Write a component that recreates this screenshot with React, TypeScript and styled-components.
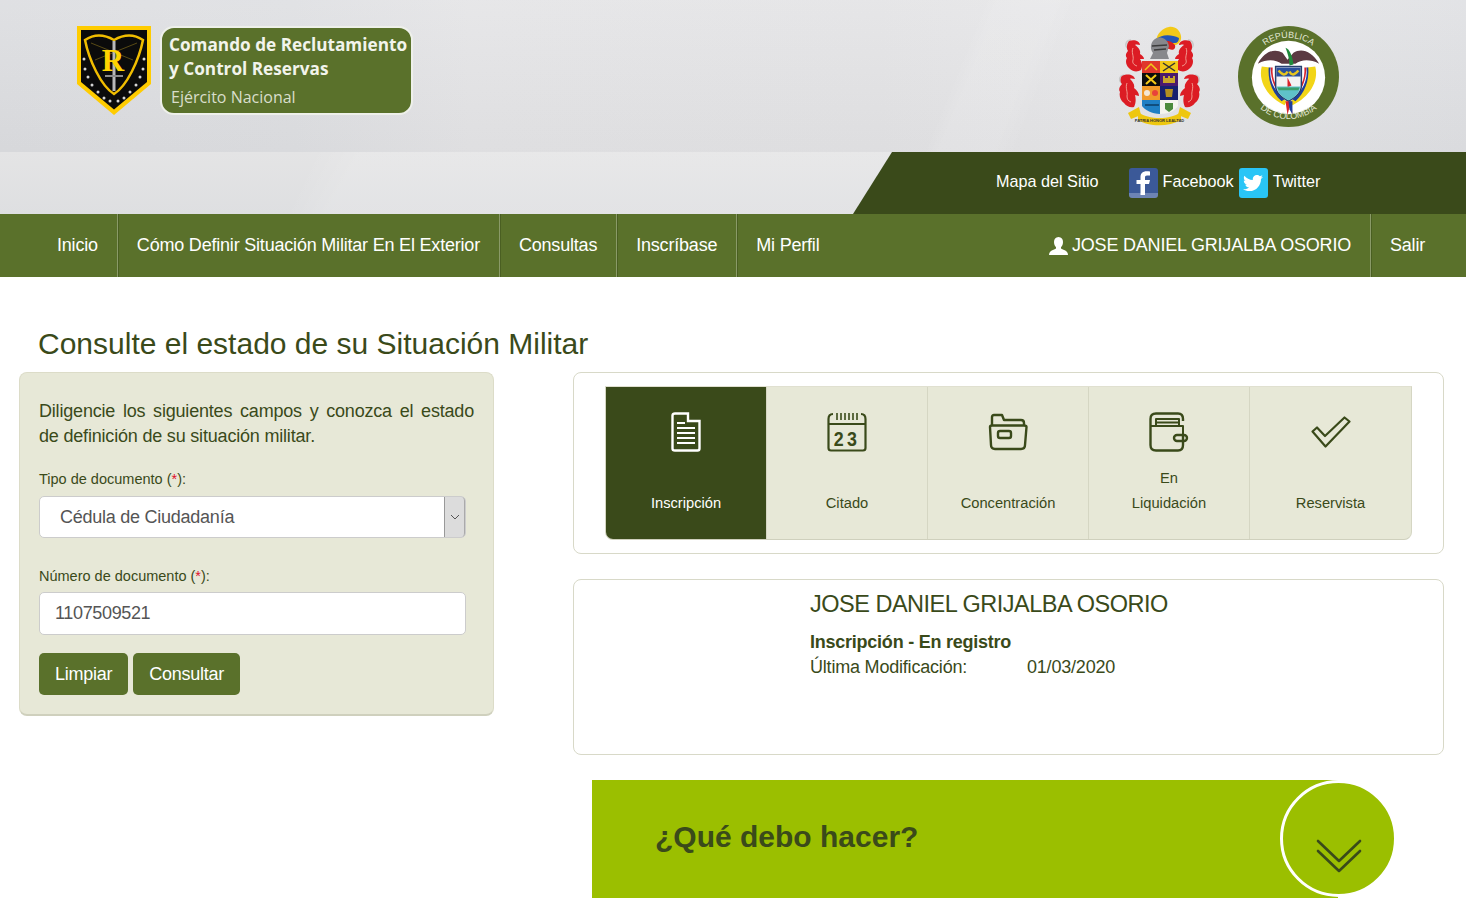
import styled, { createGlobalStyle } from "styled-components";
import { FaTwitter } from "react-icons/fa";

const dark = "#3a4a1a";
const olive = "#5a712b";
const sand = "#e7e8d7";
const lime = "#9bbf00";

const navLeft = ["Inicio", "Cómo Definir Situación Militar En El Exterior", "Consultas", "Inscríbase"];

const GlobalStyle = createGlobalStyle`
  html, body {
    margin: 0;
    padding: 0;
    background: #fff;
  }
  body {
    font-family: "Liberation Sans", Arial, sans-serif;
    color: ${dark};
  }
  * {
    box-sizing: border-box;
  }
`;

const Page = styled.div`
  width: 100%;
  min-height: 916px;
  overflow: hidden;
`;

const Header = styled.header`
  height: 214px;
  display: flex;
  flex-direction: column;
`;

const Brand = styled.div`
  height: 152px;
  flex: none;
  display: flex;
  align-items: flex-start;
  padding: 26px 0 0 77px;
  background:
    linear-gradient(112deg, transparent 0 64.500%, rgba(255, 255, 255, 0.1) 65.500% 69%, transparent 70.500%),
    linear-gradient(180deg, rgba(255, 255, 255, 0.1), rgba(0, 0, 0, 0.025)),
    linear-gradient(90deg, #dcdde0 0%, #dedfe2 20%, #e4e4e6 32%, #e3e3e5 60%, #e6e6e8 75%, #dfe0e3 100%);
`;

const BrandBadge = styled.div`
  width: 253px;
  height: 89px;
  margin: 0 0 0 9px;
  padding: 5px 0 0 7px;
  background: ${olive};
  border: 2px solid #eef0ea;
  border-radius: 14px;
  color: #f2f4ec;
  font-family: "Open Sans", sans-serif;
`;

const BrandTitle = styled.div`
  font-size: 17.2px;
  font-weight: 700;
  line-height: 24px;
  white-space: nowrap;
`;

const BrandSub = styled.div`
  margin: 4px 0 0 2px;
  font-size: 16px;
  line-height: 24px;
  color: #d9decb;
`;

const Crests = styled.div`
  margin-left: auto;
  display: flex;
  align-items: flex-start;
  gap: 38px;
  padding-right: 127px;
`;

const SocialRow = styled.div`
  height: 62px;
  flex: none;
  display: flex;
  justify-content: flex-end;
  background:
    linear-gradient(115deg, transparent 0 21%, rgba(255, 255, 255, 0.14) 24% 100%),
    linear-gradient(180deg, #e4e4e5, #dedfe1);
`;

const SocialBar = styled.div`
  width: 613px;
  display: flex;
  align-items: center;
  padding: 0 0 4px 143px;
  background: ${dark};
  clip-path: polygon(39px 0, 100% 0, 100% 100%, 0 100%);
  font-size: 16.2px;
  color: #fff;
`;

const SocialLink = styled.a`
  display: flex;
  align-items: center;
  gap: 5px;
  margin-right: 5px;
`;

const SiteMap = styled.a`
  margin-right: 30px;
`;

const SocialIcon = styled.span<{ $bg: string }>`
  width: 29px;
  height: 30px;
  margin-top: 4px;
  display: flex;
  align-items: center;
  justify-content: center;
  overflow: hidden;
  border-radius: 3px;
  background: ${(p) => p.$bg};
`;

const Nav = styled.nav`
  height: 63px;
  display: flex;
  padding-left: 38px;
  background: ${olive};
  color: #fff;
  font-size: 18px;
  letter-spacing: -0.2px;
`;

const NavItem = styled.a<{ $plain?: boolean }>`
  display: flex;
  align-items: center;
  gap: 4px;
  padding: 0 19px;
  white-space: nowrap;
  ${(p) => !p.$plain && "border-right: 1px solid #8a9a68; box-shadow: 1px 0 0 #4a5f22;"}
`;

const NavSpacer = styled.div`
  flex: 1;
`;

const SalirItem = styled(NavItem)`
  padding-right: 41px;
`;

const Title = styled.h1`
  margin: 0;
  padding: 49px 0 0 38px;
  height: 95px;
  font-size: 30px;
  font-weight: 400;
  line-height: 36px;
  color: ${dark};
`;

const Columns = styled.main`
  display: grid;
  grid-template-columns: 475px 871px;
  column-gap: 79px;
  padding-left: 19px;
  align-items: start;
`;

const FormPanel = styled.section`
  height: 344px;
  padding: 26px 19px 0 19px;
  background: ${sand};
  border: 1px solid #dcdcc8;
  border-bottom: 2px solid #cfd0bd;
  border-radius: 8px;
`;

const Intro = styled.p`
  margin: 0;
  font-size: 18px;
  line-height: 25px;
  letter-spacing: -0.19px;
  text-align: justify;
`;

const FieldLabel = styled.label<{ $top: number }>`
  display: block;
  margin-top: ${(p) => p.$top}px;
  font-size: 14.5px;
  line-height: 20px;
`;

const Req = styled.span`
  color: #e0112b;
`;

const SelectBox = styled.div`
  width: 427px;
  height: 42px;
  margin: 7px 0 28px;
  display: flex;
  align-items: center;
  padding-left: 20px;
  position: relative;
  background: #fff;
  border: 1px solid #ccc;
  border-radius: 5px;
  font-size: 18px;
  letter-spacing: -0.25px;
  color: #555;
`;

const SelectArrow = styled.span`
  position: absolute;
  top: 0;
  right: 0;
  width: 21px;
  height: 40px;
  display: flex;
  align-items: center;
  justify-content: center;
  background: #dcdcdc;
  border-left: 1px solid #999;
  border-right: 1px solid #aaa;
  border-radius: 0 4px 4px 0;
`;

const TextBox = styled.div`
  width: 427px;
  height: 43px;
  margin-top: 6px;
  display: flex;
  align-items: center;
  padding-left: 15px;
  background: #fff;
  border: 1px solid #ccc;
  border-radius: 5px;
  font-size: 18px;
  letter-spacing: -0.35px;
  color: #555;
`;

const Buttons = styled.div`
  display: flex;
  gap: 5px;
  margin-top: 18px;
`;

const Button = styled.button`
  height: 42px;
  padding: 0 16px;
  border: none;
  border-radius: 5px;
  background: ${olive};
  color: #fff;
  font-family: inherit;
  font-size: 18px;
  letter-spacing: -0.25px;
`;

const RightColumn = styled.div`
  display: flex;
  flex-direction: column;
`;

const Card = styled.section`
  background: #fff;
  border: 1px solid #d8d9c8;
  border-radius: 8px;
`;

const StepsCard = styled(Card)`
  height: 182px;
  padding: 13px 31px;
`;

const Steps = styled.div`
  width: 807px;
  height: 154px;
  display: grid;
  grid-template-columns: repeat(5, 1fr);
  overflow: hidden;
  border: 1px solid #d5d6c3;
  border-top-color: #e0e0d0;
  border-bottom: 1px solid #cfd0bd;
  border-radius: 0 0 8px 8px;
  background: ${sand};
`;

const Step = styled.div<{ $active?: boolean }>`
  display: flex;
  flex-direction: column;
  align-items: center;
  justify-content: space-between;
  padding: 25px 0 23px;
  background: ${(p) => (p.$active ? dark : "transparent")};
  color: ${(p) => (p.$active ? "#fff" : dark)};
  border-right: 1px solid #d5d6c3;
  font-size: 14.7px;
  line-height: 25px;
  text-align: center;

  &:last-child {
    border-right: none;
  }
`;

const IconBox = styled.div`
  height: 40px;
  display: flex;
  align-items: center;
`;

const PersonCard = styled(Card)`
  height: 176px;
  margin-top: 25px;
  padding: 9px 0 0 236px;
`;

const PersonName = styled.h2`
  margin: 0;
  font-size: 23.500px;
  font-weight: 400;
  line-height: 30px;
  letter-spacing: -0.5px;
`;

const Status = styled.div`
  margin-top: 11px;
  font-size: 18px;
  font-weight: 700;
  line-height: 25px;
  letter-spacing: -0.24px;
`;

const Modified = styled.div`
  display: grid;
  grid-template-columns: 217px auto;
  font-size: 18px;
  line-height: 25px;
  letter-spacing: -0.2px;
`;

const Banner = styled.section`
  position: relative;
  width: 746px;
  height: 118px;
  margin: 25px 0 0 19px;
  display: flex;
  align-items: center;
  padding: 0 0 4px 63px;
  background: ${lime};
  font-size: 30px;
  font-weight: 700;
`;

const Circle = styled.div`
  position: absolute;
  top: 0;
  left: 688px;
  width: 117px;
  height: 117px;
  display: flex;
  align-items: flex-end;
  justify-content: center;
  padding-bottom: 21px;
  border: 3px solid #fff;
  border-radius: 50%;
  background: ${lime};
`;

const Shield = () => (
  <svg width="74" height="89" viewBox="0 0 74 89">
    <path d="M0 0H74V58L37 89 0 58Z" fill="#ffcc00" />
    <path d="M4 4H70V56L37 83.500 4 56Z" fill="#0b0b0b" />
    <path d="M8 14C20 6 30 10 37 14 44 10 54 6 66 14 62 34 50 60 37 68 24 60 12 34 8 14Z" fill="none" stroke="#f0bd00" strokeWidth="2.500" />
    <path d="M14 17 56 34M60 17 18 34" stroke="#6c5a18" strokeWidth="0.800" />
    <rect x="35.500" y="15" width="3" height="50" fill="#b9b9b9" />
    <path d="M28 50H46" stroke="#8d8d8d" strokeWidth="2" />
    <text x="36" y="45" textAnchor="middle" fontFamily="Liberation Serif, serif" fontSize="31" fontWeight="700" fill="#ffd400">R</text>
    {[[7, 33], [8, 43], [11, 51], [15, 59], [21, 66], [27, 72], [33, 75], [41, 75], [47, 72], [53, 66], [59, 59], [63, 51], [66, 43], [67, 33]].map(([x, y]) => (
      <circle key={`${x}-${y}`} cx={x} cy={y} r="1.500" fill="#d5d5d5" />
    ))}
  </svg>
);

const Flame = () => (
  <>
    <path d="M12 14C7 14 5 20 9 22" fill="none" stroke="#c9c9c9" strokeWidth="1.500" />
    <path d="M10 15C15 13 21 15 21 19 19 19 18 18 16 19 19 21 22 24 21 28 23 29 25 31 25 33L21 33C23 36 24 40 22 44 19 46 14 46 11 43 7 40 6 35 8 32 6 30 7 27 9 25 7 22 8 17 10 15Z" fill="#dc1c24" />
    <path d="M14 22C12 26 15 30 14 34 13 37 15 39 18 40" fill="none" stroke="#f6b7a8" strokeWidth="0.800" />
    <path d="M5 49C0 50 -1 55 3 57" fill="none" stroke="#c9c9c9" strokeWidth="1.500" />
    <path d="M3 50C9 47 15 49 16 53 14 53 12 52 11 53 14 56 16 59 15 62 18 64 20 67 20 70L16 69C17 73 17 77 15 81 11 82 7 80 5 77 1 74 0 69 1 66 -1 63 1 60 3 58 1 56 1 52 3 50Z" fill="#dc1c24" />
    <path d="M8 57C6 62 9 66 8 70 8 73 9 75 12 76" fill="none" stroke="#f6b7a8" strokeWidth="0.800" />
  </>
);

const ArmyCrest = () => (
  <svg width="81" height="102" viewBox="0 0 81 102">
    <Flame />
    <g transform="translate(81 0) scale(-1 1)">
      <Flame />
    </g>
    <path d="M37 15C38 7 44 2 50 1 56 0 61 4 62 10 63 16 58 20 54 19L44 17Z" fill="#f2c918" />
    <path d="M36 14C42 8 52 8 60 12 60 15 58 17 56 17L40 17Z" fill="#2456b4" />
    <path d="M38 18C44 13 52 14 56 19 57 23 54 25 50 23L42 21Z" fill="#d9201f" />
    <path d="M31 33L34 27C30 22 32 14 38 12 44 10 49 14 50 20L48 27 50 33Z" fill="#87888c" />
    <path d="M33 20 48 19M35 24 47 23" stroke="#3c3c3c" strokeWidth="1.500" />
    <rect x="23" y="35" width="18" height="12" fill="#e0362c" />
    <rect x="41" y="35" width="18" height="12" fill="#f2c918" />
    <rect x="23" y="47" width="18" height="13" fill="#0c0c0c" />
    <rect x="41" y="47" width="18" height="13" fill="#4a1a6e" />
    <rect x="23" y="60" width="18" height="14" fill="#f09a2a" />
    <rect x="41" y="60" width="18" height="14" fill="#16206e" />
    <path d="M23 74H41V88C33 88 26 84 23 80Z" fill="#1f7fc4" />
    <path d="M41 74H59V80C56 85 49 88 41 88Z" fill="#f4f4ee" />
    <path d="M26 44 32 38 38 44" fill="none" stroke="#f2c918" strokeWidth="1.500" />
    <path d="M44 37 56 45M56 37 44 45" stroke="#333" strokeWidth="1.500" />
    <path d="M27 49 37 58M37 49 27 58" stroke="#f2c918" strokeWidth="2.200" />
    <path d="M44 57V50H46V52H49V50H51V52H54V50H56V57Z" fill="#c9a52a" />
    <circle cx="28" cy="67" r="3" fill="#f4e8d4" />
    <circle cx="36" cy="67" r="3" fill="#e8423a" />
    <path d="M46 63H54L53 71H47Z" fill="#b38f20" />
    <path d="M26 79 40 79" stroke="#0d3d66" strokeWidth="1.500" />
    <path d="M46 77H54V83L50 86 46 83Z" fill="#4b8a3c" />
    <path d="M9 87 20 81 22 89 12 93Z" fill="#eec70f" />
    <path d="M72 87 61 81 59 89 69 93Z" fill="#eec70f" />
    <path d="M19 86C30 94 51 94 62 86L62 94C50 101 30 101 19 94Z" fill="#eec70f" />
    <text x="40.500" y="96" textAnchor="middle" fontFamily="Liberation Sans, sans-serif" fontSize="4" fontWeight="700" fill="#333">PATRIA HONOR LEALTAD</text>
  </svg>
);

const ColombiaSeal = () => (
  <svg width="101" height="101" viewBox="0 0 102 102">
    <circle cx="51" cy="51" r="51" fill="#5a712b" />
    <circle cx="51" cy="52" r="37" fill="#fff" />
    <defs>
      <path id="sealTop" d="M11 52A40 40 0 0 1 91 52" />
      <path id="sealBottom" d="M7 50A44 44 0 0 0 95 50" />
    </defs>
    <text fontFamily="Liberation Sans, sans-serif" fontSize="9" fill="#e3e8d6">
      <textPath href="#sealTop" startOffset="50%" textAnchor="middle">REPÚBLICA</textPath>
    </text>
    <text fontFamily="Liberation Sans, sans-serif" fontSize="9" fill="#e3e8d6">
      <textPath href="#sealBottom" startOffset="50%" textAnchor="middle">DE COLOMBIA</textPath>
    </text>
    <path d="M20 38C28 24 38 23 45 27L50 34 56 27C64 22 74 25 82 38 72 33 64 34 58 38H44C38 34 30 33 20 38Z" fill="#5b3a42" />
    <path d="M48 22C52 23 55 30 56 39L52 40C52 33 50 27 48 22Z" fill="#1f8a3b" />
    <path d="M24 41C20 56 30 72 47 80L49 76C36 68 30 56 32 42Z" fill="#f2d517" />
    <path d="M78 41C82 56 72 72 55 80L53 76C66 68 72 56 70 42Z" fill="#f2d517" />
    <path d="M33 42C31 55 37 66 47 74L44 76C35 68 30 56 31 42Z" fill="#1e3f9e" />
    <path d="M35 42C34 54 39 64 48 71L47 74C38 67 33 55 33 42Z" fill="#d8232a" />
    <path d="M69 42C71 55 65 66 55 74L58 76C67 68 72 56 71 42Z" fill="#1e3f9e" />
    <path d="M67 42C68 54 63 64 54 71L55 74C64 67 69 55 69 42Z" fill="#d8232a" />
    <path d="M38 41H64V60C64 68 58 72 51 76 44 72 38 68 38 60Z" fill="#f3f3f3" stroke="#27406f" strokeWidth="1.500" />
    <rect x="38.800" y="42" width="24.400" height="9" fill="#2a4f9c" />
    <path d="M41 45C45 50 48 50 50 46M52 46C54 50 57 50 61 45" fill="none" stroke="#e7c51f" strokeWidth="2.500" />
    <path d="M50 52 54 60 50 62Z" fill="#d8232a" />
    <path d="M39 61H63C62 68 57 72 51 75 45 72 40 68 39 61Z" fill="#5fc1c9" />
    <path d="M40 62H62L61 65H41Z" fill="#3c9f6c" />
    <path d="M48 76 50 90 52 82 55 89 54 76Z" fill="#d8232a" />
    <path d="M51 76 52 84 55 89 55 76Z" fill="#1e3f9e" />
  </svg>
);

const FileIcon = () => (
  <svg width="30" height="40" viewBox="0 0 30 40" fill="none" stroke="currentColor" strokeWidth="2.400">
    <path d="M4 1.500H17V9H28.500V36.500Q28.500 38.500 26.500 38.500H4Q1.500 38.500 1.500 36.500V3.500Q1.500 1.500 4 1.500Z" />
    <path d="M6 11H14M6 16H24M6 21H24M6 26H24M6 31H24" strokeWidth="2" />
  </svg>
);

const CalendarIcon = () => (
  <svg width="40" height="40" viewBox="0 0 40 40" fill="none" stroke="currentColor" strokeWidth="2.200">
    <path d="M1.500 7Q1.500 2 6 2M38.500 7Q38.500 2 34 2M1.500 12H38.500M1.500 7V36Q1.500 38.500 4 38.500H36Q38.500 38.500 38.500 36V7" />
    <path d="M10 1V8M14 1V8M18 1V8M22 1V8M26 1V8M30 1V8" strokeWidth="1.600" />
    <text transform="translate(20 34) scale(0.85 1)" textAnchor="middle" fontFamily="Liberation Sans, sans-serif" fontSize="21" fontWeight="700" letterSpacing="4" fill="currentColor" stroke="none">23</text>
  </svg>
);

const FolderIcon = () => (
  <svg width="40" height="38" viewBox="0 0 40 38" fill="none" stroke="currentColor" strokeWidth="2.400" strokeLinejoin="round">
    <path d="M4 12V4Q4 2 6 2H14L16 7H33Q36 7 36 10V13" />
    <path d="M2 14Q2 12.500 4 12.500H36Q38.500 12.500 38.500 14L37 32Q37 36 33 36H7Q3 36 3 32Z" />
    <rect x="10" y="18" width="13" height="7" rx="2" />
  </svg>
);

const WalletIcon = () => (
  <svg width="40" height="40" viewBox="0 0 40 40" fill="none" stroke="currentColor" strokeWidth="2.400" strokeLinejoin="round">
    <path d="M34 23V33Q34 38.500 29 38.500H7Q1.500 38.500 1.500 33V7Q1.500 1.500 7 1.500H29Q34 1.500 34 7V9" />
    <path d="M2 14H34V23M7 14V7H30V14M7 10.500H30" strokeWidth="2" />
    <rect x="25" y="23" width="13" height="6" rx="3" />
  </svg>
);

const CheckIcon = () => (
  <svg width="40" height="32" viewBox="0 0 40 32" fill="none" stroke="currentColor" strokeWidth="2.200" strokeLinejoin="round">
    <path d="M1.500 15.500 6 11.500 14 20 33.500 1.500 38.500 5.500 14.500 30.500Z" />
  </svg>
);

const steps = [
  { id: 1, label: ["Inscripción"], icon: <FileIcon />, active: true },
  { id: 2, label: ["Citado"], icon: <CalendarIcon /> },
  { id: 3, label: ["Concentración"], icon: <FolderIcon /> },
  { id: 4, label: ["En", "Liquidación"], icon: <WalletIcon /> },
  { id: 5, label: ["Reservista"], icon: <CheckIcon /> },
];

export default function App() {
  return (
    <Page>
      <GlobalStyle />
      <Header>
        <Brand>
          <Shield />
          <BrandBadge>
            <BrandTitle>Comando de Reclutamiento</BrandTitle>
            <BrandTitle>y Control Reservas</BrandTitle>
            <BrandSub>Ejército Nacional</BrandSub>
          </BrandBadge>
          <Crests>
            <ArmyCrest />
            <ColombiaSeal />
          </Crests>
        </Brand>
        <SocialRow>
          <SocialBar>
            <SiteMap>Mapa del Sitio</SiteMap>
            <SocialLink>
              <SocialIcon $bg="linear-gradient(#3b5998 0 82%, #6d84b4 82%)">
                <svg width="16" height="24" viewBox="0 0 16 24">
                  <path d="M10 24V13H14L15 9H10V6.500C10 5.200 10.500 4.500 12 4.500H15V0.500C14 0.300 13 0.200 11.500 0.200 8 0.200 5.500 2.300 5.500 6V9H1.500V13H5.500V24Z" fill="#fff" />
                </svg>
              </SocialIcon>
              Facebook
            </SocialLink>
            <SocialLink>
              <SocialIcon $bg="#29c5f6">
                <FaTwitter size={20} color="#fff" />
              </SocialIcon>
              Twitter
            </SocialLink>
          </SocialBar>
        </SocialRow>
      </Header>

      <Nav>
        {navLeft.map((item) => (
          <NavItem key={item}>{item}</NavItem>
        ))}
        <NavItem $plain>Mi Perfil</NavItem>
        <NavSpacer />
        <NavItem>
          <svg width="19" height="18" viewBox="0 0 19 18">
            <path d="M9.500 0C12.500 0 14 2.200 14 5 14 7.500 13 9.200 12 10.300V11.500C14 12.800 19 13.500 19 18H0C0 13.500 5 12.800 7 11.500V10.300C6 9.200 5 7.500 5 5 5 2.200 6.500 0 9.500 0Z" fill="#fff" />
          </svg>
          JOSE DANIEL GRIJALBA OSORIO
        </NavItem>
        <SalirItem $plain>Salir</SalirItem>
      </Nav>

      <Title>Consulte el estado de su Situación Militar</Title>

      <Columns>
        <FormPanel>
          <Intro>Diligencie los siguientes campos y conozca el estado de definición de su situación militar.</Intro>
          <FieldLabel $top={20}>
            Tipo de documento (<Req>*</Req>):
          </FieldLabel>
          <SelectBox>
            Cédula de Ciudadanía
            <SelectArrow>
              <svg width="10" height="6" viewBox="0 0 10 6" fill="none" stroke="#555" strokeWidth="1">
                <path d="M1 1 5 5 9 1" />
              </svg>
            </SelectArrow>
          </SelectBox>
          <FieldLabel $top={0}>
            Número de documento (<Req>*</Req>):
          </FieldLabel>
          <TextBox>1107509521</TextBox>
          <Buttons>
            <Button>Limpiar</Button>
            <Button>Consultar</Button>
          </Buttons>
        </FormPanel>

        <RightColumn>
          <StepsCard>
            <Steps>
              {steps.map((step) => (
                <Step key={step.id} $active={step.active}>
                  <IconBox>{step.icon}</IconBox>
                  <div>
                    {step.label.map((line) => (
                      <div key={line}>{line}</div>
                    ))}
                  </div>
                </Step>
              ))}
            </Steps>
          </StepsCard>

          <PersonCard>
            <PersonName>JOSE DANIEL GRIJALBA OSORIO</PersonName>
            <Status>Inscripción - En registro</Status>
            <Modified>
              <span>Última Modificación:</span>
              <span>01/03/2020</span>
            </Modified>
          </PersonCard>

          <Banner>
            ¿Qué debo hacer?
            <Circle>
              <svg width="46" height="34" viewBox="0 0 46 34" fill="none" stroke={dark} strokeWidth="2.600" strokeLinecap="round" strokeLinejoin="round">
                <path d="M2 2 23 22 44 2M2 12 23 32 44 12" />
              </svg>
            </Circle>
          </Banner>
        </RightColumn>
      </Columns>
    </Page>
  );
}
